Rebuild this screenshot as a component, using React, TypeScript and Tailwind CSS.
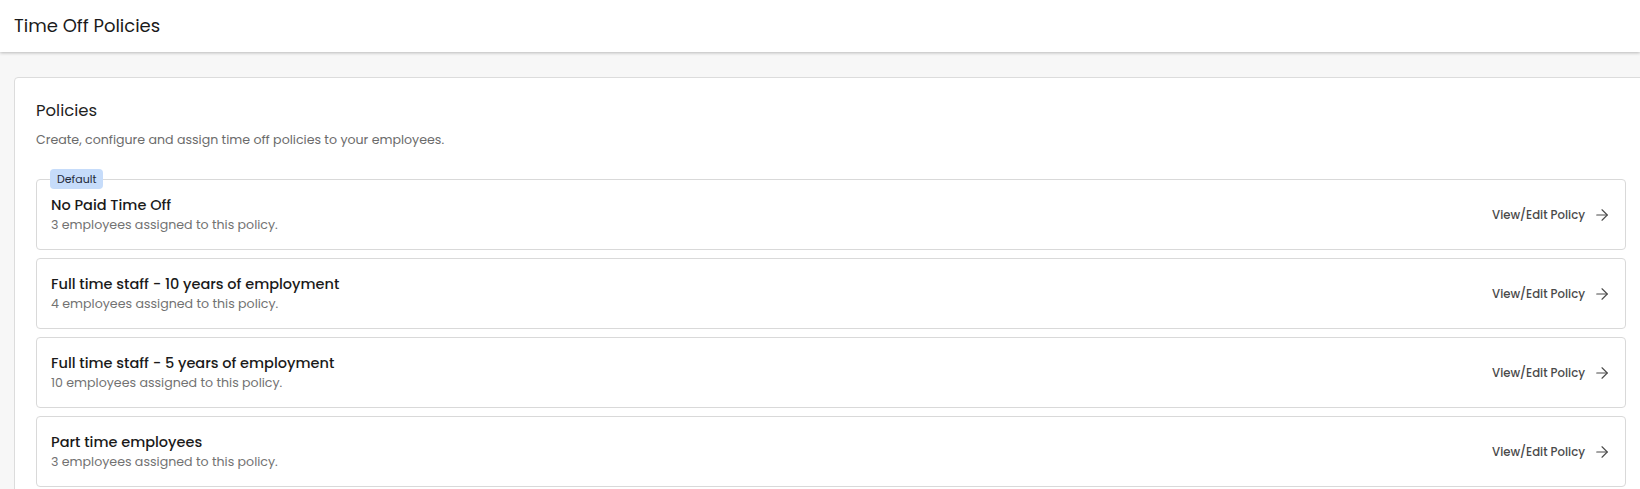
import React from "react";
import { ArrowRight } from "lucide-react";

const policies = [
  { name: "No Paid Time Off", count: "3 employees assigned to this policy.", isDefault: true },
  { name: "Full time staff - 10 years of employment", count: "4 employees assigned to this policy." },
  { name: "Full time staff - 5 years of employment", count: "10 employees assigned to this policy." },
  { name: "Part time employees", count: "3 employees assigned to this policy." },
];

export default function App() {
  return (
    <div
      className="w-[1640px] h-[489px] overflow-hidden bg-[#f7f7f7]"
      style={{ fontFamily: "Poppins, 'Open Sans', sans-serif" }}
    >
      <header className="h-[52px] bg-white flex items-center px-[14px] shadow-[0_1px_3px_rgba(0,0,0,0.25)] relative z-10">
        <h1 className="text-[18px] text-[#1a1a1a] leading-none">Time Off Policies</h1>
      </header>
      <div className="pt-[25px] pl-[14px]">
        <section className="w-[1634px] bg-white border border-[#dcdcdc] rounded-[4px] pt-[21px] pl-[21px] pr-[20px] pb-[20px]">
          <h2 className="text-[16.5px] text-[#1f1f1f] leading-[24px]">Policies</h2>
          <p className="mt-[7px] text-[12.6px] text-[#6b6b6b] leading-[20px]">
            Create, configure and assign time off policies to your employees.
          </p>
          <div className="mt-[29px] flex flex-col gap-[8px] w-[1590px]">
            {policies.map((p) => (
              <div
                key={p.name}
                className="relative h-[71px] border border-[#d9d9d9] rounded-[4px] pl-[14px] pr-[14px] flex items-center justify-between"
              >
                {p.isDefault && (
                  <span className="absolute left-[13px] top-[-11px] h-[20px] px-[7px] rounded-[4px] bg-[#c6dcfa] text-[11px] text-[#1f2a3a] leading-[20px]">
                    Default
                  </span>
                )}
                <div className="flex flex-col">
                  <span className="text-[14.5px] font-medium text-[#1a1a1a] leading-[20px]">{p.name}</span>
                  <span className="text-[12.6px] text-[#727272] leading-[20px]">{p.count}</span>
                </div>
                <div className="flex items-center gap-[8px] text-[#4a4a4a]">
                  <span className="text-[11.7px] font-medium leading-[20px]">View/Edit Policy</span>
                  <ArrowRight size={18} strokeWidth={1.5} />
                </div>
              </div>
            ))}
          </div>
        </section>
      </div>
    </div>
  );
}
